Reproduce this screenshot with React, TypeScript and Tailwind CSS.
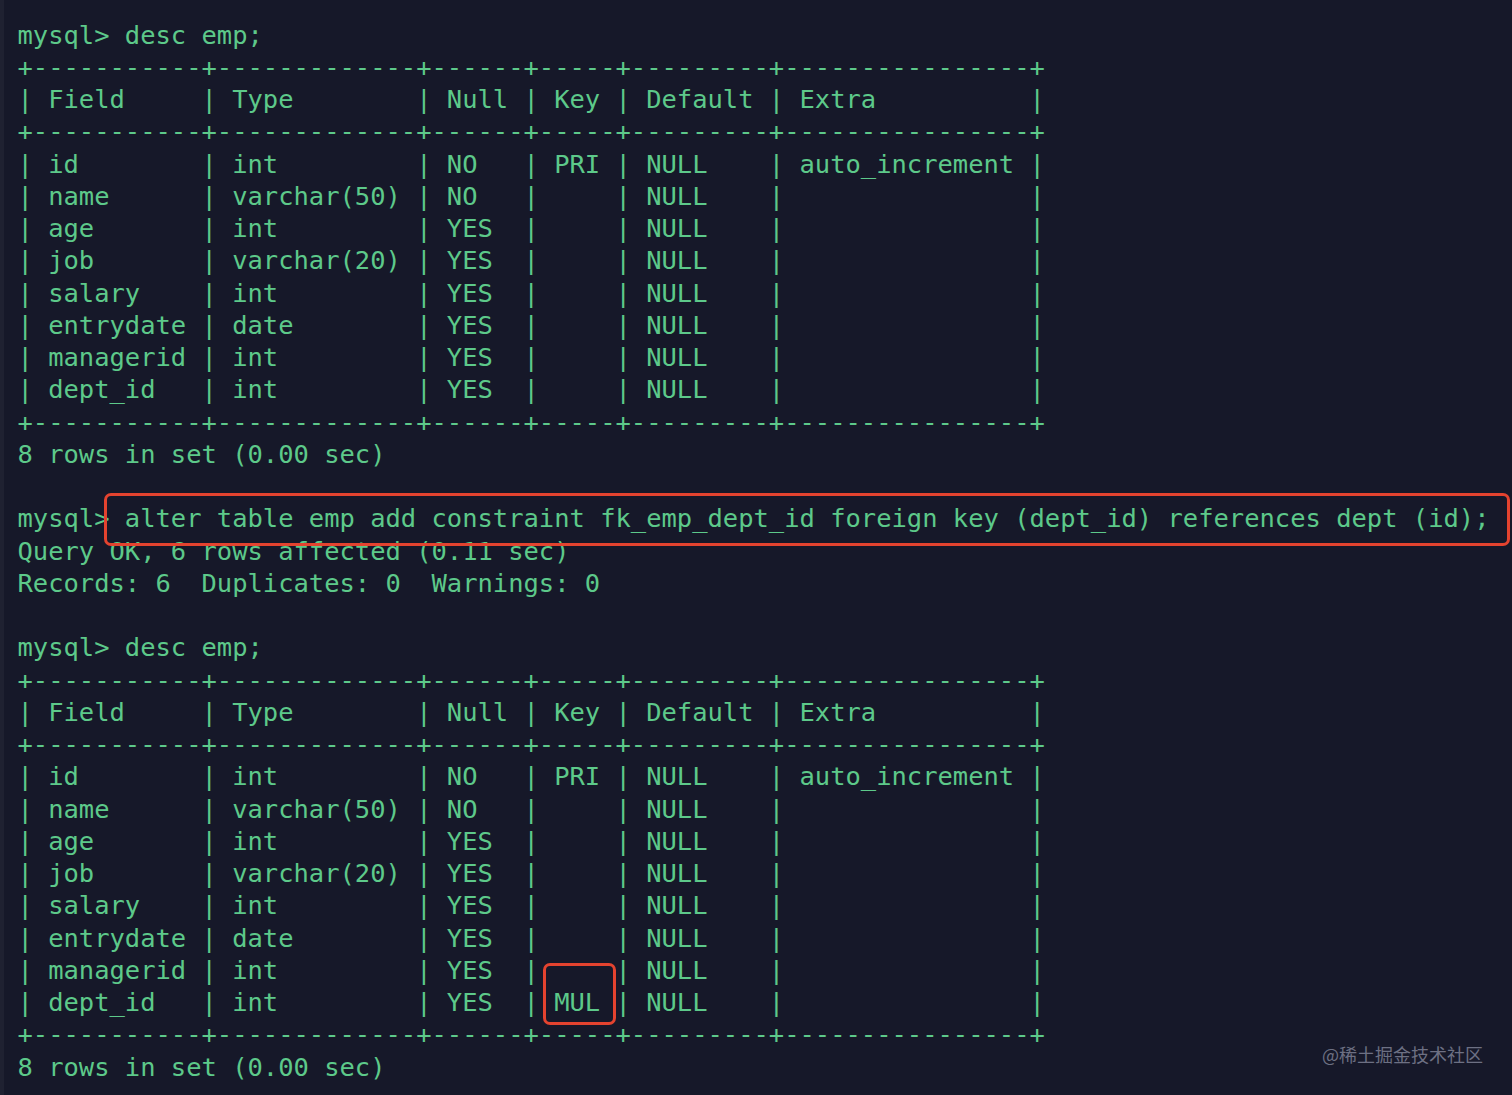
const sep = "+-----------+-------------+------+-----+---------+----------------+";
const head = "| Field     | Type        | Null | Key | Default | Extra          |";

const rows = (lastKey: string) => [
    "| id        | int         | NO   | PRI | NULL    | auto_increment |",
    "| name      | varchar(50) | NO   |     | NULL    |                |",
    "| age       | int         | YES  |     | NULL    |                |",
    "| job       | varchar(20) | YES  |     | NULL    |                |",
    "| salary    | int         | YES  |     | NULL    |                |",
    "| entrydate | date        | YES  |     | NULL    |                |",
    "| managerid | int         | YES  |     | NULL    |                |",
    `| dept_id   | int         | YES  | ${lastKey} | NULL    |                |`,
];

const lines: string[] = [
    "mysql> desc emp;",
    sep,
    head,
    sep,
    ...rows("   "),
    sep,
    "8 rows in set (0.00 sec)",
    "",
    "mysql> alter table emp add constraint fk_emp_dept_id foreign key (dept_id) references dept (id);",
    "Query OK, 6 rows affected (0.11 sec)",
    "Records: 6  Duplicates: 0  Warnings: 0",
    "",
    "mysql> desc emp;",
    sep,
    head,
    sep,
    ...rows("MUL"),
    sep,
    "8 rows in set (0.00 sec)",
];

export default function App() {
    return (
        <div className="relative w-[1512px] h-[1095px] overflow-hidden bg-[#161829] border-l-[4px] border-[#1f2131]">
            <div className="pl-[13.5px] pt-[18.5px] text-[#5dc98a] text-[25.47px] leading-[32.25px] font-['DejaVu_Sans_Mono',monospace]">
                {lines.map((line, i) => (
                    <div key={i} className="h-[32.25px] whitespace-pre">{line}</div>
                ))}
            </div>

            {/* annotation boxes */}
            <div className="absolute left-[100px] top-[493px] w-[1406px] h-[53px] border-[3px] border-[#e4432f] rounded-[7px]" />
            <div className="absolute left-[539px] top-[963px] w-[73px] h-[62px] border-[3px] border-[#e4432f] rounded-[7px]" />

            <div className="absolute left-[1318px] top-[1041px] text-[18px] text-[#6d7083] font-['Noto_Sans_CJK_SC',sans-serif]">
                @稀土掘金技术社区
            </div>
        </div>
    )
}
